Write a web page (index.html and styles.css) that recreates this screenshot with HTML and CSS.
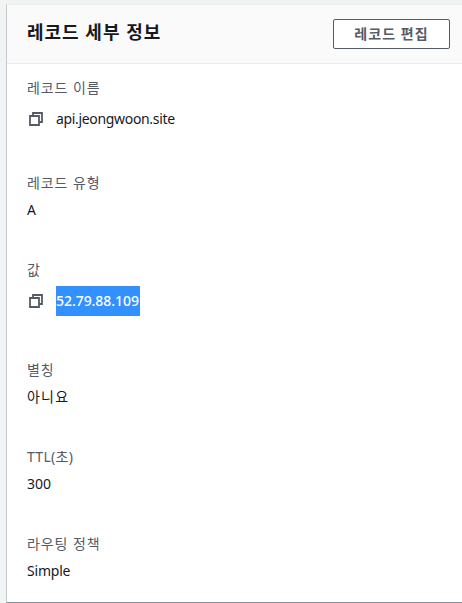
FILE: index.html
```
<!DOCTYPE html>
<html lang="ko">
<head>
    <meta charset="UTF-8">
    <meta name="viewport" content="width=device-width, initial-scale=1.0">
    <title>레코드 세부 정보</title>
    <link rel="stylesheet" href="styles.css">
</head>
<body>
    <div class="panel">
        <div class="panel-header">
            <h2>레코드 세부 정보</h2>
            <button class="edit-btn">레코드 편집</button>
        </div>
        <div class="panel-body">
            <div class="field">
                <div class="label">레코드 이름</div>
                <div class="value copy">
                    <svg class="copy-icon" width="16" height="16" viewBox="0 0 16 16">
                        <path d="M2 5h9v9H2z M5 5V2h9v9h-3"/>
                    </svg>
                    <span class="domain">api.jeongwoon.site</span>
                </div>
            </div>
            <div class="field">
                <div class="label">레코드 유형</div>
                <div class="value">A</div>
            </div>
            <div class="field field-ip">
                <div class="label">값</div>
                <div class="value copy">
                    <svg class="copy-icon" width="16" height="16" viewBox="0 0 16 16">
                        <path d="M2 5h9v9H2z M5 5V2h9v9h-3"/>
                    </svg>
                    <span class="selected">52.79.88.109</span>
                </div>
            </div>
            <div class="field">
                <div class="label">별칭</div>
                <div class="value korean">아니요</div>
            </div>
            <div class="field">
                <div class="label label-ttl">TTL(초)</div>
                <div class="value">300</div>
            </div>
            <div class="field">
                <div class="label">라우팅 정책</div>
                <div class="value simple">Simple</div>
            </div>
        </div>
    </div>
</body>
</html>
```
FILE: styles.css
```
* {
    box-sizing: border-box;
}
body {
    margin: 0;
    height: 603px;
    padding: 4px 0 0 6px;
    overflow: hidden;
    background-color: #f2f3f3;
    font-family: "Noto Sans", "Noto Sans CJK KR", sans-serif;
    font-size: 14px;
    line-height: 22px;
    color: #16191f;
}
.panel {
    height: 599px;
    background-color: #fff;
    border-top: 1px solid #eaeded;
    border-left: 1px solid #c3cbd0;
    border-bottom: 1px solid #879196;
}
.panel-header {
    display: flex;
    justify-content: space-between;
    align-items: center;
    height: 59px;
    padding: 0 12px 0 20px;
    background-color: #fafafa;
    border-bottom: 1px solid #eaeded;
}
h2 {
    margin: 0 0 4px;
    font-size: 18px;
    font-weight: 700;
    line-height: 22px;
    letter-spacing: 1px;
}
.edit-btn {
    width: 117px;
    height: 30px;
    margin-bottom: 1px;
    padding: 0 0 2px;
    border: 1px solid #545b64;
    border-radius: 2px;
    background-color: #fff;
    color: #545b64;
    font-family: inherit;
    font-size: 14px;
    font-weight: 700;
    letter-spacing: 1.1px;
}
.panel-body {
    padding: 13px 20px 0;
}
.field {
    margin-bottom: 38px;
}
.field-ip {
    margin-bottom: 43px;
}
.label {
    margin-bottom: 5px;
    color: #545b64;
    letter-spacing: 0.9px;
}
.label-ttl {
    letter-spacing: 0.3px;
}
.value {
    height: 22px;
}
.korean {
    letter-spacing: 1.2px;
}
.simple {
    letter-spacing: -0.2px;
}
.copy {
    display: flex;
    align-items: center;
    gap: 12px;
    height: 30px;
    padding-left: 1px;
}
.copy-icon {
    fill: none;
    stroke: #545b64;
    stroke-width: 1.8;
}
.domain {
    letter-spacing: -0.33px;
}
.selected {
    width: 84px;
    line-height: 30px;
    background-color: #3390ff;
    color: #fff;
    font-weight: 500;
    letter-spacing: -0.05px;
}
```
